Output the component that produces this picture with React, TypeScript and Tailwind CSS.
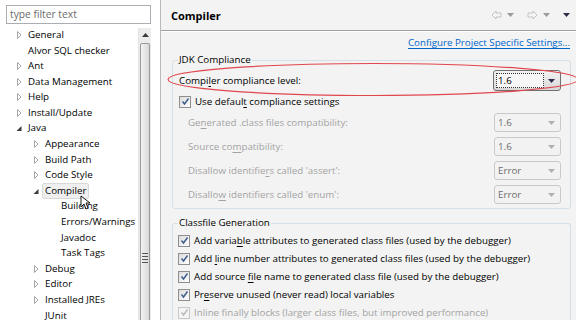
import type { ReactNode } from "react";

type Node = {
  label: ReactNode;
  level: number;
  state: "open" | "closed" | "leaf";
  selected?: boolean;
};

const tree: Node[] = [
  { label: "General", level: 0, state: "closed" },
  { label: "Alvor SQL checker", level: 0, state: "leaf" },
  { label: "Ant", level: 0, state: "closed" },
  { label: "Data Management", level: 0, state: "closed" },
  { label: "Help", level: 0, state: "closed" },
  { label: "Install/Update", level: 0, state: "closed" },
  { label: "Java", level: 0, state: "open" },
  { label: "Appearance", level: 1, state: "closed" },
  { label: "Build Path", level: 1, state: "closed" },
  { label: "Code Style", level: 1, state: "closed" },
  { label: "Compiler", level: 1, state: "open", selected: true },
  { label: "Building", level: 2, state: "leaf" },
  { label: "Errors/Warnings", level: 2, state: "leaf" },
  { label: "Javadoc", level: 2, state: "leaf" },
  { label: "Task Tags", level: 2, state: "leaf" },
  { label: "Debug", level: 1, state: "closed" },
  { label: "Editor", level: 1, state: "closed" },
  { label: "Installed JREs", level: 1, state: "closed" },
  { label: "JUnit", level: 1, state: "leaf" },
];

const indent = ["pl-[12px]", "pl-[29px]", "pl-[45px]"];

function Expander({ state }: { state: Node["state"] }) {
  if (state === "leaf") return <span className="w-[12px]" />;
  if (state === "closed")
    return (
      <svg width="12" height="12" viewBox="0 0 12 12" className="shrink-0">
        <path d="M5.5 2.5 L9 6 L5.5 9.5 Z" fill="#fff" stroke="#a6a6a6" />
      </svg>
    );
  return (
    <svg width="12" height="12" viewBox="0 0 12 12" className="shrink-0">
      <path d="M9.5 4 L9.5 9 L4.5 9 Z" fill="#3c3c3c" />
    </svg>
  );
}

function U({ children }: { children: ReactNode }) {
  return <span className="underline underline-offset-2">{children}</span>;
}

function Check({ label, disabled }: { label: ReactNode; disabled?: boolean }) {
  return (
    <div className="flex h-[18px] shrink-0 items-center gap-[4px]">
      <span
        className={`flex h-[12px] w-[12px] items-center justify-center border ${
          disabled ? "border-[#c8c8c8] bg-[#f4f4f4]" : "border-[#8e8f8f] bg-gradient-to-br from-[#dcdcdc] to-white"
        }`}
      >
        <svg width="9" height="9" viewBox="0 0 9 9">
          <path
            d="M1.5 4.5 L3.5 7 L7.5 1.5"
            fill="none"
            stroke={disabled ? "#b8b8b8" : "#3a5a8c"}
            strokeWidth="1.4"
          />
        </svg>
      </span>
      <span className={disabled ? "text-[#a3a3a3]" : "text-black"}>{label}</span>
    </div>
  );
}

function Combo({ value }: { value: string }) {
  return (
    <div className="flex h-[19px] w-[67px] items-center justify-between rounded-[3px] border border-[#c9c9c9] bg-[#f2f2f2] pl-[3px] pr-[5px] text-[#6d6d6d]">
      <span>{value}</span>
      <svg width="7" height="4" viewBox="0 0 7 4">
        <path d="M0 0 L7 0 L3.5 4 Z" fill="#b0b0b0" />
      </svg>
    </div>
  );
}

function Row({ label, value }: { label: ReactNode; value: string }) {
  return (
    <div className="flex h-[24px] items-center justify-between pl-[15px] pr-[6px]">
      <span className="text-[#a3a3a3]">{label}</span>
      <Combo value={value} />
    </div>
  );
}

function NavArrow({ dir }: { dir: "left" | "right" }) {
  const d =
    dir === "left"
      ? "M1 5 L5 1 L5 3 L10 3 L10 7 L5 7 L5 9 Z"
      : "M10 5 L6 1 L6 3 L1 3 L1 7 L6 7 L6 9 Z";
  return (
    <svg width="11" height="10" viewBox="0 0 11 10">
      <path d={d} fill="#f4f4f4" stroke="#c3c3c3" />
    </svg>
  );
}

function Caret({ dark }: { dark?: boolean }) {
  return (
    <svg width="7" height="4" viewBox="0 0 7 4">
      <path d="M0 0 L7 0 L3.5 4 Z" fill={dark ? "#2d2d4a" : "#9a9a9a"} />
    </svg>
  );
}

export default function App() {
  return (
    <div className="flex h-[320px] w-[576px] overflow-hidden bg-white font-['Open_Sans',sans-serif] text-[9.75px] leading-none text-black">
      {/* left: filter + tree */}
      <div className="flex w-[151px] shrink-0 flex-col">
        <div className="ml-[6px] mt-[5px] flex h-[19px] shrink-0 items-center border border-[#abadb3] bg-white pl-[3px] text-[10.25px] text-[#6d6d6d]">
          type filter text
        </div>
        <div className="mt-[4px] flex min-h-0 flex-1">
          <div className="relative -mt-[1px] flex-1">
            {tree.map((n, i) => (
              <div key={i} className={`flex h-[15.6px] items-center ${indent[n.level]}`}>
                <Expander state={n.state} />
                <span
                  className={`ml-[1px] px-[2px] py-[2px] ${
                    n.selected ? "rounded-[2px] border border-[#d9d9d9] bg-[#efefef]" : "border border-transparent"
                  }`}
                >
                  {n.label}
                </span>
              </div>
            ))}
            <svg width="12" height="16" viewBox="0 0 12 16" className="absolute left-[80px] top-[168px]">
              <path d="M1 1 L1 12 L4 9 L6 14 L8 13 L6 8 L10 8 Z" fill="#fff" stroke="#000" strokeWidth="0.9" />
            </svg>
          </div>
          <div className="flex w-[14px] flex-col border-l border-[#e3e3e3] bg-[#ececec]">
            <div className="flex h-[14px] shrink-0 items-center justify-center">
              <svg width="7" height="4" viewBox="0 0 7 4">
                <path d="M0 4 L7 4 L3.5 0 Z" fill="#3a3a3a" />
              </svg>
            </div>
            <div className="mx-[1px] mt-[1px] flex h-[430px] shrink-0 flex-col items-center justify-center gap-[2px] rounded-[2px] border border-[#9a9a9a] bg-gradient-to-r from-[#f3f3f3] via-[#e6e6e6] to-[#d9d9d9]">
              <span className="h-px w-[6px] bg-[#555]" />
              <span className="h-px w-[6px] bg-[#555]" />
              <span className="h-px w-[6px] bg-[#555]" />
              <span className="h-px w-[6px] bg-[#555]" />
            </div>
          </div>
        </div>
      </div>

      <div className="w-[9px] shrink-0 bg-white" />

      {/* right: preference page */}
      <div className="relative flex min-w-0 flex-1 flex-col border-l border-[#b9b9b9] bg-[#f3f3f3]">
        <div className="flex h-[30px] shrink-0 items-center justify-between pl-[10px] pr-[6px]">
          <span className="text-[11px] font-bold">Compiler</span>
          <div className="flex items-center gap-[5px]">
            <NavArrow dir="left" />
            <Caret />
            <span className="w-[3px]" />
            <NavArrow dir="right" />
            <Caret />
            <span className="w-[3px]" />
            <Caret dark />
          </div>
        </div>
        <div className="h-[2px] shrink-0 border-t border-[#a0a0a0] bg-white" />

        <div className="flex shrink-0 justify-end pr-[6px] pt-[6px]">
          <span className="text-[#0066cc] underline underline-offset-2">Configure Project Specific Settings...</span>
        </div>

        {/* JDK Compliance */}
        <div className="relative ml-[11px] mr-[5px] mt-[12px] h-[149px] shrink-0 rounded-[3px] border border-[#d5dfe5] px-[6px] pt-[8px]">
          <span className="absolute -top-[6px] left-[5px] bg-[#f3f3f3] px-[1px]">JDK Compliance</span>
          <div className="flex h-[24px] items-center justify-between pr-[3px]">
            <span>
              Compi<U>l</U>er compliance level:
            </span>
            <div className="flex h-[21px] w-[68px] items-center rounded-[3px] border border-[#707070] bg-gradient-to-b from-[#f2f2f2] to-[#d8d8d8] p-[2px]">
              <span className="flex h-full flex-1 items-center border border-dotted border-[#333] bg-[#f6f6f6] pl-[1px]">1.6</span>
              <span className="flex w-[14px] justify-center">
                <Caret dark />
              </span>
            </div>
          </div>
          <Check
            label={
              <>
                Use defaul<U>t</U> compliance settings
              </>
            }
          />
          <div className="-ml-[6px] -mr-[3px]">
            <Row
              label={
                <>
                  Ge<U>n</U>erated .class files compatibility:
                </>
              }
              value="1.6"
            />
            <Row
              label={
                <>
                  Source co<U>m</U>patibility:
                </>
              }
              value="1.6"
            />
            <Row
              label={
                <>
                  Disallow identifie<U>r</U>s called 'assert':
                </>
              }
              value="Error"
            />
            <Row
              label={
                <>
                  Disallo<U>w</U> identifiers called 'enum':
                </>
              }
              value="Error"
            />
          </div>
        </div>

        {/* Classfile Generation */}
        <div className="relative ml-[11px] mr-[5px] mt-[14px] flex min-h-0 flex-1 flex-col rounded-t-[3px] border border-b-0 border-[#d5dfe5] px-[5px] pt-[8px]">
          <span className="absolute -top-[6px] left-[5px] bg-[#f3f3f3] px-[1px]">Classfile Generation</span>
          <Check
            label={
              <>
                Add varia<U>b</U>le attributes to generated class files (used by the debugger)
              </>
            }
          />
          <Check
            label={
              <>
                Add <U>l</U>ine number attributes to generated class files (used by the debugger)
              </>
            }
          />
          <Check
            label={
              <>
                Add source <U>f</U>ile name to generated class file (used by the debugger)
              </>
            }
          />
          <Check
            label={
              <>
                Pr<U>e</U>serve unused (never read) local variables
              </>
            }
          />
          <Check disabled label="Inline finally blocks (larger class files, but improved performance)" />
        </div>

        {/* hand-drawn highlight */}
        <svg width="420" height="40" viewBox="0 0 420 40" className="pointer-events-none absolute left-[5px] top-[60px]">
          <ellipse cx="207" cy="19.5" rx="205" ry="16" fill="none" stroke="#e0474c" strokeWidth="1.2" />
        </svg>
      </div>
    </div>
  );
}
